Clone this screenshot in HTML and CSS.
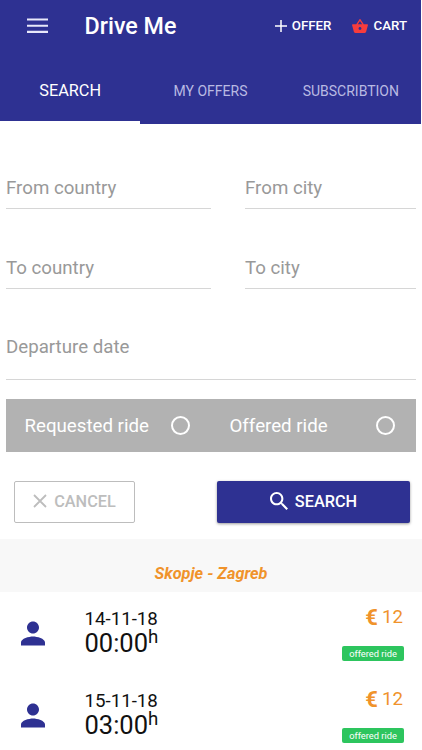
FILE: index.html
```html
<!DOCTYPE html>
<html lang="en">

<head>
    <meta charset="UTF-8">
    <meta name="viewport" content="width=device-width, initial-scale=1.0">
    <title>Drive Me</title>
    <link rel="stylesheet" href="styles.css">
</head>

<body>
    <header class="header">
        <div class="toolbar">
            <svg class="menu" viewBox="0 0 22 16"><path d="M0 1.2h22M0 7.7h22M0 14.2h22" stroke="#e8e8fa" stroke-width="2.2"/></svg>
            <h1 class="title">Drive Me</h1>
            <a class="action offer">
                <svg class="plus" viewBox="0 0 12 12"><path d="M6 0v12M0 6h12" stroke="#fff" stroke-width="1.5"/></svg>
                <span>OFFER</span>
            </a>
            <a class="action cart">
                <svg class="basket" viewBox="1 2 22 19"><path fill="#f73c3c" d="M17.21 9l-4.38-6.56c-.19-.28-.51-.42-.83-.42-.32 0-.64.14-.83.43L6.79 9H2c-.55 0-1 .45-1 1 0 .09.01.18.04.27l2.54 9.27c.23.84 1 1.46 1.92 1.46h13c.92 0 1.69-.62 1.93-1.46l2.54-9.27L23 10c0-.55-.45-1-1-1h-4.79zM9 9l3-4.4L15 9H9zm3 8c-1.1 0-2-.9-2-2s.9-2 2-2 2 .9 2 2-.9 2-2 2z"/></svg>
                <span>CART</span>
            </a>
        </div>
        <nav class="tabs">
            <a class="tab active"><span>SEARCH</span></a>
            <a class="tab"><span>MY OFFERS</span></a>
            <a class="tab"><span>SUBSCRIBTION</span></a>
        </nav>
    </header>

    <main>
        <form class="search-form">
            <div class="fields">
                <div class="field">From country</div>
                <div class="field">From city</div>
                <div class="field">To country</div>
                <div class="field">To city</div>
                <div class="field date">Departure date</div>
            </div>
            <div class="ride-type">
                <label class="option"><span>Requested ride</span><i class="radio"></i></label>
                <label class="option"><span>Offered ride</span><i class="radio"></i></label>
            </div>
            <div class="buttons">
                <div class="btn cancel">
                    <svg class="cross" viewBox="0 0 14 14"><path d="M1 1l12 12M13 1L1 13" stroke="#bdbdbd" stroke-width="1.8"/></svg>
                    <span>CANCEL</span>
                </div>
                <div class="btn submit">
                    <svg class="magnifier" viewBox="3 3 17.5 17.5"><path fill="#fff" d="M15.5 14h-.79l-.28-.27C15.41 12.59 16 11.11 16 9.5 16 5.91 13.09 3 9.5 3S3 5.91 3 9.5 5.91 16 9.5 16c1.61 0 3.09-.59 4.23-1.57l.27.28v.79l5 4.99L20.49 19l-4.99-5zm-6 0C7.01 14 5 11.99 5 9.5S7.01 5 9.5 5 14 7.01 14 9.5 11.99 14 9.5 14z"/></svg>
                    <span>SEARCH</span>
                </div>
            </div>
        </form>

        <h2 class="route">Skopje - Zagreb</h2>

        <div class="ride">
            <svg class="person" viewBox="4 4 16 16"><path fill="#2e3192" d="M12 12c2.21 0 4-1.79 4-4s-1.79-4-4-4-4 1.79-4 4 1.79 4 4 4zm0 2c-2.67 0-8 1.34-8 4v2h16v-2c0-2.66-5.33-4-8-4z"/></svg>
            <div class="when">
                <div class="day">14-11-18</div>
                <div class="time"><span>00:00</span><span class="hour">h</span></div>
            </div>
            <div class="info">
                <div class="price"><b>€</b><span>12</span></div>
                <div class="badge">offered ride</div>
            </div>
        </div>
        <div class="ride">
            <svg class="person" viewBox="4 4 16 16"><path fill="#2e3192" d="M12 12c2.21 0 4-1.79 4-4s-1.79-4-4-4-4 1.79-4 4 1.79 4 4 4zm0 2c-2.67 0-8 1.34-8 4v2h16v-2c0-2.66-5.33-4-8-4z"/></svg>
            <div class="when">
                <div class="day">15-11-18</div>
                <div class="time"><span>03:00</span><span class="hour">h</span></div>
            </div>
            <div class="info">
                <div class="price"><b>€</b><span>12</span></div>
                <div class="badge">offered ride</div>
            </div>
        </div>
    </main>
</body>

</html>
```
FILE: styles.css
```css
* {
    box-sizing: border-box;
}

body {
    margin: 0;
    height: 750px;
    overflow: hidden;
    background: #fff;
    color: #111;
    font-family: Roboto, sans-serif;
}

svg {
    display: block;
    flex: none;
}

.header {
    width: 421px;
    height: 124px;
    background: #2e3192;
    color: #fff;
}

.toolbar {
    display: flex;
    align-items: center;
    height: 51px;
    padding: 0 14px 0 27px;
}

.menu {
    width: 21px;
    height: 16px;
}

.title {
    flex: 1;
    margin: 0 0 0 36.5px;
    font-size: 23.3px;
    font-weight: 500;
}

.action {
    display: flex;
    align-items: center;
    font-size: 13.3px;
    font-weight: 500;
}

.plus {
    width: 12px;
    height: 12px;
    margin-right: 5px;
}

.cart {
    margin-left: 21px;
}

.basket {
    width: 16px;
    height: 14px;
    margin-right: 5px;
}

.tabs {
    display: grid;
    grid-template-columns: repeat(3, 1fr);
    height: 73px;
}

.tab {
    display: flex;
    justify-content: center;
    padding-top: 30px;
    font-size: 14px;
    line-height: 20px;
    color: #b9bae2;
}

.tab.active {
    font-size: 16.3px;
    color: #fff;
    border-bottom: 3px solid #fff;
}

.search-form {
    padding: 40px 6px 0;
}

.fields {
    display: grid;
    grid-template-columns: 205px 171px;
    column-gap: 34px;
}

.field {
    height: 45px;
    margin-bottom: 35px;
    padding-top: 12px;
    border-bottom: 1px solid #d6d6d6;
    font-size: 18.7px;
    line-height: 24px;
    color: #999;
}

.field.date {
    grid-column: 1 / 3;
    height: 56px;
    margin-bottom: 19px;
    padding-top: 11px;
}

.ride-type {
    display: flex;
    height: 53px;
    background: #b2b2b2;
    color: #fff;
    font-size: 18.7px;
}

.option {
    display: flex;
    align-items: center;
    justify-content: space-between;
    width: 205px;
    padding: 0 21px 0 18.5px;
}

.radio {
    width: 19px;
    height: 19px;
    border: 2px solid #fff;
    border-radius: 50%;
}

.buttons {
    display: flex;
    justify-content: space-between;
    padding: 29px 6px 16px 8px;
}

.btn {
    display: flex;
    align-items: center;
    justify-content: center;
    height: 42px;
    padding-bottom: 2px;
    border-radius: 2px;
    font-size: 16.3px;
    font-weight: 500;
}

.cancel {
    width: 121px;
    border: 1px solid #bdbdbd;
    color: #bdbdbd;
}

.cross {
    width: 14px;
    height: 14px;
    margin-right: 7px;
}

.submit {
    width: 193px;
    background: #2e3192;
    color: #fff;
    box-shadow: 0 1px 3px rgba(0, 0, 0, .4);
}

.magnifier {
    width: 18px;
    height: 18px;
    margin-right: 7px;
}

.route {
    height: 53px;
    margin: 0;
    padding-top: 24px;
    background: #f8f8f8;
    font-size: 16.3px;
    font-style: italic;
    font-weight: 700;
    line-height: 22px;
    text-align: center;
    color: #f0932b;
}

.ride {
    display: flex;
    height: 82px;
    padding: 0 18px 0 21px;
}

.person {
    width: 24px;
    height: 25px;
    margin: 29px 39.5px 0 0;
}

.when {
    flex: 1;
    padding-top: 16px;
}

.day {
    font-size: 18.7px;
    line-height: 22px;
}

.time {
    display: flex;
    align-items: flex-start;
    font-size: 25.5px;
    line-height: 27px;
}

.hour {
    font-size: 18.7px;
    line-height: 14px;
}

.info {
    display: flex;
    flex-direction: column;
    align-items: flex-end;
    padding-top: 13px;
}

.price {
    display: flex;
    align-items: center;
    gap: 4px;
    height: 24px;
    padding-right: 1px;
    font-size: 18.7px;
    color: #f0932b;
}

.price b {
    font-size: 22px;
}

.badge {
    width: 62px;
    height: 15px;
    margin-top: 17px;
    border-radius: 2px;
    background: #2dc55e;
    color: #fff;
    font-size: 9.3px;
    line-height: 15px;
    text-align: center;
}
```
